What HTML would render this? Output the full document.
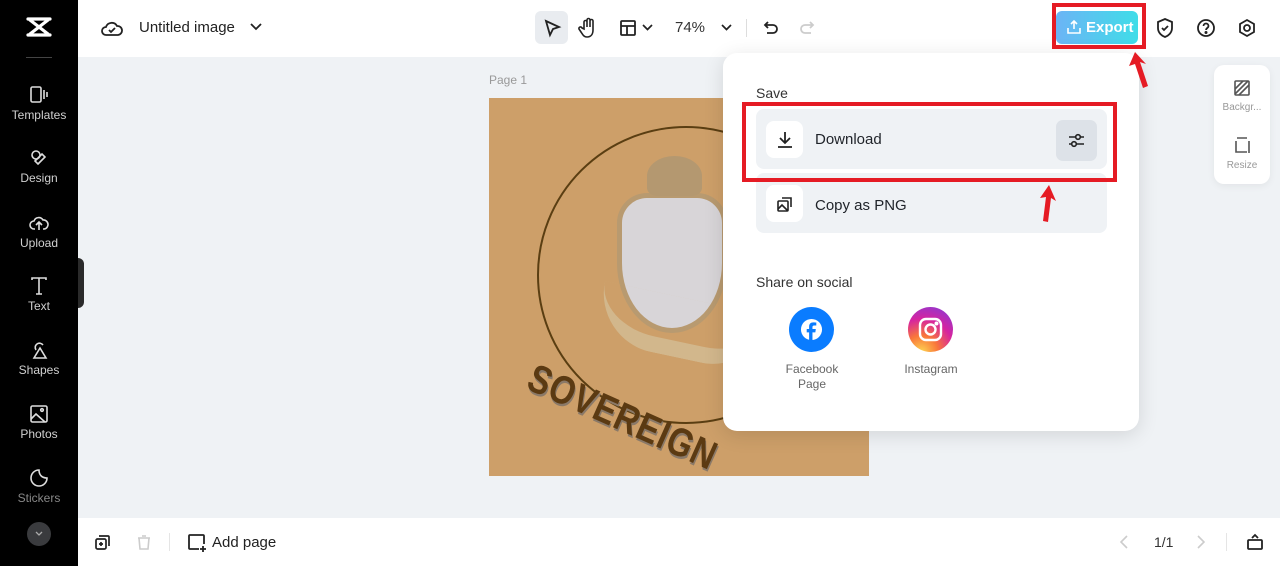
<!DOCTYPE html>
<html><head><meta charset="utf-8"><style>
*{margin:0;padding:0;box-sizing:border-box}
body{width:1280px;height:566px;overflow:hidden;font-family:"Liberation Sans",sans-serif;background:#eff2f5;position:relative;color:#1f2329}
.abs{position:absolute}
#side{left:0;top:0;width:78px;height:566px;background:#000}
.si{position:absolute;left:0;width:78px;text-align:center;color:#d0d0d0;font-size:12px}
.si svg{display:block;margin:0 auto 3px}
#top{left:78px;top:0;width:1202px;height:57px;background:#fff}
#bot{left:78px;top:518px;width:1202px;height:48px;background:#fff}
#pop{left:723px;top:53px;width:416px;height:378px;background:#fff;border-radius:14px;box-shadow:0 4px 20px rgba(0,0,0,.12)}
.row{position:absolute;left:33px;width:351px;height:60px;background:#eff2f5;border-radius:8px}
.ib{position:absolute;left:10px;top:12px;width:37px;height:37px;background:#fff;border-radius:8px}
.red{position:absolute;border:4px solid #e51b24}
</style></head><body>
<div id="side" class="abs">
 <svg class="abs" style="left:25px;top:15px" width="28" height="24" viewBox="0 0 28 24" fill="none" stroke="#fff" stroke-width="3.2" stroke-linecap="round"><path d="M3 4h22M3 20h22M5 5l18 14M23 5L5 19"/></svg>
 <div class="abs" style="left:26px;top:57px;width:26px;height:1px;background:#444"></div>
 <div class="si" style="top:85px"><svg width="20" height="20" viewBox="0 0 20 20" fill="none" stroke="#ddd" stroke-width="1.6"><rect x="2" y="2" width="10" height="15" rx="1.5"/><path d="M15 5v9M18 7v5"/></svg>Templates</div>
 <div class="si" style="top:148px"><svg width="20" height="20" viewBox="0 0 20 20" fill="none" stroke="#ddd" stroke-width="1.6"><circle cx="7" cy="7" r="4"/><path d="M9 16l7-7-3-3-7 7z"/></svg>Design</div>
 <div class="si" style="top:213px"><svg width="20" height="20" viewBox="0 0 20 20" fill="none" stroke="#ddd" stroke-width="1.6"><path d="M6 16H5a4 4 0 010-8 5 5 0 019-1 4 4 0 011 9h-1M10 17v-7M7 12l3-3 3 3"/></svg>Upload</div>
 <div class="si" style="top:276px"><svg width="20" height="20" viewBox="0 0 20 20" fill="none" stroke="#ddd" stroke-width="1.6"><path d="M3 4V2h14v2M10 2v16M7 18h6"/></svg>Text</div>
 <div class="si" style="top:340px"><svg width="20" height="20" viewBox="0 0 20 20" fill="none" stroke="#ddd" stroke-width="1.6"><path d="M7 10a4 4 0 117-5M11 8l-6 10h12z"/></svg>Shapes</div>
 <div class="si" style="top:404px"><svg width="20" height="20" viewBox="0 0 20 20" fill="none" stroke="#ddd" stroke-width="1.6"><rect x="2" y="2" width="16" height="16" rx="1.5"/><path d="M2 15l5-5 9 8"/><circle cx="13" cy="6" r="1.3"/></svg>Photos</div>
 <div class="si" style="top:468px;color:#888"><svg width="20" height="20" viewBox="0 0 20 20" fill="none" stroke="#ddd" stroke-width="1.6"><path d="M18 10a8 8 0 11-8-8c0 5 3 8 8 8z"/></svg>Stickers</div>
 <div class="abs" style="left:27px;top:522px;width:24px;height:24px;border-radius:50%;background:#3a3b3e"><svg style="margin:9px 8px" width="8" height="6" viewBox="0 0 8 6" fill="none" stroke="#aaa" stroke-width="1.3"><path d="M1 1l3 3 3-3"/></svg></div>
 <div class="abs" style="left:78px;top:258px;width:6px;height:50px;background:#2a2a2a;border-radius:0 6px 6px 0"></div>
</div>
<div id="top" class="abs">
 <svg class="abs" style="left:23px;top:18px" width="22" height="20" viewBox="0 0 22 20" fill="none" stroke="#222" stroke-width="1.8"><path d="M6 17H5a4 4 0 010-8 6 6 0 0111-1 4.5 4.5 0 011 9z"/><path d="M8 12l2 2 4-4"/></svg>
 <div class="abs" style="left:61px;top:19px;font-size:15px;color:#222">Untitled image</div>
 <svg class="abs" style="left:172px;top:23px" width="12" height="8" viewBox="0 0 12 8" fill="none" stroke="#222" stroke-width="1.8"><path d="M1 1l5 5 5-5"/></svg>
 <div class="abs" style="left:457px;top:11px;width:33px;height:33px;background:#e9ecf0;border-radius:6px"></div>
 <svg class="abs" style="left:464px;top:18px" width="20" height="20" viewBox="0 0 20 20" fill="none" stroke="#222" stroke-width="1.8"><path d="M4 3l13 6-6 2-3 6z"/></svg>
 <svg class="abs" style="left:500px;top:17px" width="20" height="22" viewBox="0 0 20 22" fill="none" stroke="#222" stroke-width="1.6"><path d="M6 12V5a1.5 1.5 0 013 0v5V3a1.5 1.5 0 013 0v7V4a1.5 1.5 0 013 0v9c0 4-2 7-6 7-3 0-4-2-6-5l-2-3a1.5 1.5 0 013-1z"/></svg>
 <svg class="abs" style="left:541px;top:19px" width="18" height="18" viewBox="0 0 18 18" fill="none" stroke="#222" stroke-width="1.8"><rect x="2" y="2" width="14" height="14" rx="1"/><path d="M2 7h14M8 7v9"/></svg>
 <svg class="abs" style="left:564px;top:24px" width="11" height="7" viewBox="0 0 11 7" fill="none" stroke="#222" stroke-width="1.7"><path d="M1 1l4.5 4.5L10 1"/></svg>
 <div class="abs" style="left:597px;top:19px;font-size:15px;color:#333">74%</div>
 <svg class="abs" style="left:643px;top:24px" width="11" height="7" viewBox="0 0 11 7" fill="none" stroke="#222" stroke-width="1.7"><path d="M1 1l4.5 4.5L10 1"/></svg>
 <div class="abs" style="left:668px;top:19px;width:1px;height:18px;background:#ddd"></div>
 <svg class="abs" style="left:684px;top:19px" width="18" height="18" viewBox="0 0 18 18" fill="none" stroke="#222" stroke-width="1.8"><path d="M6 3L3 6l3 3M3 6h8a4 4 0 010 8H5"/></svg>
 <svg class="abs" style="left:720px;top:19px" width="18" height="18" viewBox="0 0 18 18" fill="none" stroke="#ccc" stroke-width="1.8"><path d="M12 3l3 3-3 3M15 6H7a4 4 0 000 8h6"/></svg>
 <div class="abs" style="left:978px;top:11px;width:82px;height:33px;border-radius:6px;background:linear-gradient(90deg,#6cb4f5,#3fdde8)"></div>
 <div class="abs" style="left:1008px;top:19px;color:#fff;font-weight:bold;font-size:15px">Export</div>
 <svg class="abs" style="left:988px;top:19px" width="16" height="16" viewBox="0 0 16 16" fill="none" stroke="#fff" stroke-width="1.6"><path d="M8 10V2M5 5l3-3 3 3M2 9v5h12V9"/></svg>
 <svg class="abs" style="left:1077px;top:17px" width="20" height="22" viewBox="0 0 20 22" fill="none" stroke="#222" stroke-width="1.8"><path d="M10 2l7 3v6c0 5-4 8-7 9-3-1-7-4-7-9V5z"/><path d="M7 11l2 2 4-4"/></svg>
 <svg class="abs" style="left:1118px;top:18px" width="20" height="20" viewBox="0 0 20 20" fill="none" stroke="#222" stroke-width="1.8"><circle cx="10" cy="10" r="8"/><path d="M7.5 8a2.5 2.5 0 115 0c0 2-2.5 2-2.5 4"/><circle cx="10" cy="14.5" r=".6" fill="#222"/></svg>
 <svg class="abs" style="left:1159px;top:18px" width="20" height="20" viewBox="0 0 20 20" fill="none" stroke="#222" stroke-width="1.8"><path d="M10 2l7 4v8l-7 4-7-4V6z"/><circle cx="10" cy="10" r="3"/></svg>
</div>
<div class="abs" style="left:489px;top:73px;font-size:12px;color:#999">Page 1</div>
<div class="abs" style="left:489px;top:98px;width:380px;height:378px;background:#cd9f69;overflow:hidden">
 <div class="abs" style="left:48px;top:28px;width:298px;height:298px;border-radius:50%;border:2px solid #5a3e12"></div>
 <div class="abs" style="left:128px;top:95px;width:110px;height:140px;background:#d8d5d8;border:5px solid #b89a70;border-radius:30px 30px 50% 50%"></div>
 <div class="abs" style="left:158px;top:58px;width:55px;height:40px;background:#b49870;border-radius:50% 50% 20% 20%"></div>
 <div class="abs" style="left:108px;top:200px;width:170px;height:60px;border-bottom:16px solid #d2b78c;border-radius:0 0 85px 85px;transform:rotate(12deg)"></div>
 <div class="abs" style="left:50px;top:258px;font-size:40px;font-weight:bold;color:#5b3a12;transform:rotate(24deg) scaleX(.82);transform-origin:0 0;letter-spacing:1px;text-shadow:2px 2px #8a7968;white-space:nowrap">SOVEREIGN</div>
</div>
<div class="abs" style="left:1214px;top:65px;width:56px;height:119px;background:#fff;border-radius:10px;box-shadow:0 2px 8px rgba(0,0,0,.06)">
 <svg class="abs" style="left:19px;top:14px" width="18" height="18" viewBox="0 0 18 18" fill="none" stroke="#555" stroke-width="1.6"><rect x="2" y="2" width="14" height="14" rx="1"/><path d="M2 10l8-8M6 16l10-10M2 15L15 2"/></svg>
 <div class="abs" style="left:0;top:37px;width:56px;text-align:center;font-size:10px;color:#999">Backgr...</div>
 <svg class="abs" style="left:19px;top:71px" width="18" height="18" viewBox="0 0 18 18" fill="none" stroke="#555" stroke-width="1.6"><path d="M3 5v11h11M4 2h10M16 5v12"/></svg>
 <div class="abs" style="left:0;top:95px;width:56px;text-align:center;font-size:10px;color:#999">Resize</div>
</div>
<div id="pop" class="abs">
 <div class="abs" style="left:33px;top:32px;font-size:14px;color:#333">Save</div>
 <div class="row" style="top:56px">
  <div class="ib"><svg style="margin:9px" width="20" height="20" viewBox="0 0 20 20" fill="none" stroke="#222" stroke-width="1.8"><path d="M10 2v11M5 8l5 5 5-5M3 17h14"/></svg></div>
  <div class="abs" style="left:59px;top:22px;font-size:15px">Download</div>
  <div class="abs" style="left:300px;top:11px;width:41px;height:41px;background:#dde2e8;border-radius:7px"><svg style="margin:11px" width="19" height="19" viewBox="0 0 19 19" fill="none" stroke="#222" stroke-width="1.6"><path d="M2 6h15M2 13h15"/><circle cx="11" cy="6" r="2.3" fill="#dde2e8"/><circle cx="7" cy="13" r="2.3" fill="#dde2e8"/></svg></div>
 </div>
 <div class="row" style="top:120px">
  <div class="ib"><svg style="margin:10px" width="18" height="18" viewBox="0 0 18 18" fill="none" stroke="#222" stroke-width="1.6"><rect x="2" y="6" width="10" height="10" rx="1"/><path d="M6 3h9v9M2 14l4-4 6 6"/></svg></div>
  <div class="abs" style="left:59px;top:24px;font-size:15px">Copy as PNG</div>
 </div>
 <div class="abs" style="left:33px;top:221px;font-size:14px;color:#333">Share on social</div>
 <div class="abs" style="left:66px;top:254px;width:45px;height:45px;border-radius:50%;background:#0a7cff"><svg style="margin:11px" width="23" height="23" viewBox="0 0 24 24"><circle cx="12" cy="12" r="11" fill="#fff"/><path d="M13 24v-9h3l.5-3.5H13V9.5c0-1 .4-1.7 1.8-1.7H17V4.7c-.5 0-1.7-.2-3-.2-3 0-4.5 1.7-4.5 4.6v2.4H7V15h2.5v9z" fill="#0a7cff"/></svg></div>
 <div class="abs" style="left:48px;top:309px;width:82px;text-align:center;font-size:12px;color:#666;line-height:15px">Facebook<br>Page</div>
 <div class="abs" style="left:185px;top:254px;width:45px;height:45px;border-radius:50%;background:radial-gradient(circle at 30% 100%,#fdd452 0,#f9773a 30%,#d6249f 60%,#7a3ee0 100%)"><svg style="margin:10px" width="25" height="25" viewBox="0 0 25 25" fill="none" stroke="#fff" stroke-width="2.4"><rect x="2" y="2" width="21" height="21" rx="6"/><circle cx="12.5" cy="12.5" r="5"/><circle cx="18.5" cy="6.5" r=".8" fill="#fff"/></svg></div>
 <div class="abs" style="left:168px;top:309px;width:80px;text-align:center;font-size:12px;color:#666">Instagram</div>
</div>
<div class="red" style="left:1052px;top:3px;width:94px;height:46px"></div>
<div class="red" style="left:742px;top:102px;width:375px;height:80px"></div>
<svg class="abs" style="left:1126px;top:50px" width="26" height="40" viewBox="0 0 26 40"><path d="M9 2l-6 14 6-2 8 24 5-2-8-24 6 2z" fill="#e51b24"/></svg>
<svg class="abs" style="left:1034px;top:183px" width="26" height="40" viewBox="0 0 26 40"><path d="M15 2l-9 13 6-1-3 24 5 1 3-24 5 3z" fill="#e51b24"/></svg>
<div id="bot" class="abs">
 <svg class="abs" style="left:16px;top:16px" width="17" height="17" viewBox="0 0 17 17" fill="none" stroke="#222" stroke-width="1.7"><rect x="2" y="5" width="10" height="10" rx="1.5"/><path d="M5 2h9a1 1 0 011 1v9M7 8v4M5 10h4"/></svg>
 <svg class="abs" style="left:58px;top:16px" width="16" height="17" viewBox="0 0 16 17" fill="none" stroke="#ccc" stroke-width="1.6"><path d="M2 4h12M6 2h4M3 4l1 11h8l1-11"/></svg>
 <div class="abs" style="left:91px;top:15px;width:1px;height:18px;background:#e5e5e5"></div>
 <svg class="abs" style="left:109px;top:15px" width="20" height="19" viewBox="0 0 20 19" fill="none" stroke="#222" stroke-width="1.8"><path d="M12 16H3a1 1 0 01-1-1V3a1 1 0 011-1h13a1 1 0 011 1v8M16 13v6M13 16h6"/></svg>
 <div class="abs" style="left:134px;top:16px;font-size:15px;color:#222">Add page</div>
 <svg class="abs" style="left:1042px;top:17px" width="8" height="14" viewBox="0 0 8 14" fill="none" stroke="#ccc" stroke-width="1.6"><path d="M7 1L1 7l6 6"/></svg>
 <div class="abs" style="left:1076px;top:16px;font-size:14px;color:#333">1/1</div>
 <svg class="abs" style="left:1119px;top:17px" width="8" height="14" viewBox="0 0 8 14" fill="none" stroke="#ccc" stroke-width="1.6"><path d="M1 1l6 6-6 6"/></svg>
 <div class="abs" style="left:1148px;top:15px;width:1px;height:18px;background:#e5e5e5"></div>
 <svg class="abs" style="left:1168px;top:14px" width="18" height="19" viewBox="0 0 18 19" fill="none" stroke="#222" stroke-width="1.8"><rect x="2" y="8" width="14" height="9" rx="1"/><path d="M6 6l3-3 3 3"/></svg>
</div>
</body></html>
